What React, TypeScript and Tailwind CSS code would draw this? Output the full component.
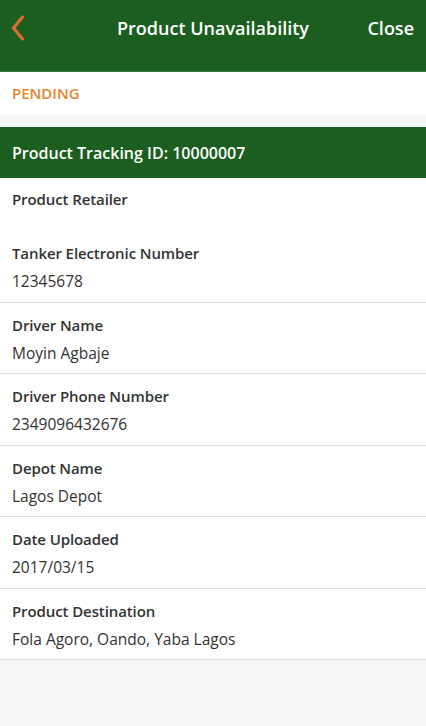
import React from "react";

const rows: { label: string; value: string }[] = [
  { label: "Tanker Electronic Number", value: "12345678" },
  { label: "Driver Name", value: "Moyin Agbaje" },
  { label: "Driver Phone Number", value: "2349096432676" },
  { label: "Depot Name", value: "Lagos Depot" },
  { label: "Date Uploaded", value: "2017/03/15" },
  { label: "Product Destination", value: "Fola Agoro, Oando, Yaba Lagos" },
];

export default function App() {
  return (
    <div
      className="w-[426px] h-[726px] bg-[#f7f7f7] flex flex-col overflow-hidden"
      style={{ fontFamily: "'Open Sans', 'Noto Sans', sans-serif" }}
    >
      <div className="h-[72px] bg-[#1b5e20] flex items-start pt-[16px] px-[10px] border-b border-[#2e7d32]">
        <div className="w-[80px]">
          <svg width="14" height="26" viewBox="0 0 14 26" className="ml-[1px] mt-[-1px]">
            <path d="M11.5 2 L2.5 13 L11.5 24" fill="none" stroke="#dd6d35" strokeWidth="3.2" strokeLinecap="round" strokeLinejoin="round" />
          </svg>
        </div>
        <div className="flex-1 text-center text-white text-[18px] font-semibold leading-[24px]">Product Unavailability</div>
        <div className="w-[80px] text-right text-white text-[18px] font-semibold leading-[24px] pr-[2px]">Close</div>
      </div>
      <div className="h-[43px] bg-white flex items-center px-[12px]">
        <span className="text-[#e8842c] text-[15px] font-semibold">PENDING</span>
      </div>
      <div className="h-[12px]" />
      <div className="h-[51px] bg-[#1b5e20] flex items-center px-[12px]">
        <span className="text-white text-[16px] font-semibold">Product Tracking ID: 10000007</span>
      </div>
      <div className="bg-white">
        <div className="h-[53px] px-[12px] pt-[10px]">
          <div className="text-[#333333] text-[15px] font-semibold leading-[22px] tracking-[-0.1px]">Product Retailer</div>
        </div>
        {rows.map((r) => (
          <div key={r.label} className="h-[71.5px] px-[12px] pt-[11px] border-b border-[#e0e0e0]">
            <div className="text-[#333333] text-[15px] font-semibold leading-[22px] tracking-[-0.1px]">{r.label}</div>
            <div className="text-[#333333] text-[15.5px] leading-[22px] mt-[6px]">{r.value}</div>
          </div>
        ))}
      </div>
    </div>
  );
}
